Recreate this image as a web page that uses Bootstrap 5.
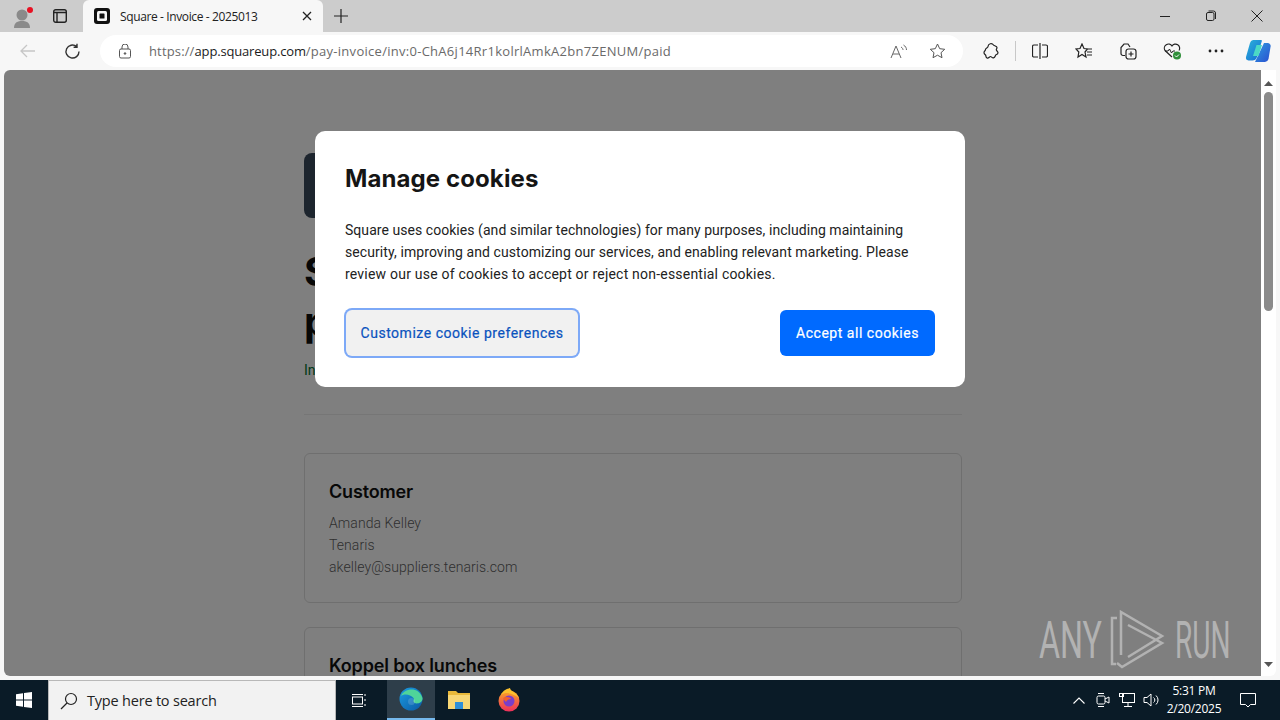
<!DOCTYPE html>
<html lang="en">
<head>
<meta charset="utf-8">
<title>Square - Invoice - 2025013</title>
<link rel="stylesheet" href="https://cdn.jsdelivr.net/npm/bootstrap@5.3.0/dist/css/bootstrap.min.css">
<style>
html,body{height:100%;overflow:hidden}
body{width:1280px;height:720px;background:#f7f7f7;font-family:"Roboto","Liberation Sans",sans-serif;display:flex;flex-direction:column}
svg{display:block;flex:none}
.tabstrip{height:32px;background:#ccc;flex:none}
.profile-zone{width:83px;padding-left:11px;gap:18px;flex:none}
.tab-on{width:240px;height:32px;flex:none;background:#f7f7f7;border-radius:6px 6px 0 0;padding:0 11px;font:12px "Open Sans","Liberation Sans",sans-serif;color:#222}
.tab-title{margin-left:10px;flex:1;letter-spacing:-.38px;white-space:nowrap}
.newtab{margin-left:11px}
.win-ctrls{margin-left:auto;gap:28px;padding-right:14px}
.toolbar{height:38px;background:#f7f7f7;flex:none;padding-left:20px}
.nav-zone{gap:28px;width:80px;flex:none}
.urlbar{width:863px;height:32px;flex:none;border-radius:16px;background:#fff;padding:0 17px 0 19px;font:13px "Open Sans","Liberation Sans",sans-serif;color:#6a6a6a}
.url-text{margin-left:18px;flex:1;white-space:nowrap;letter-spacing:.28px}
.url-text b{font-weight:400;color:#1b1b1b;letter-spacing:-.17px}
.url-proto{letter-spacing:.15px}
.read-aloud{margin-right:22px}
.tools{margin-left:6px;flex:none}
.toolcell{width:44px;display:flex;justify-content:center}
.toolcell-end{width:40px}
.tooldiv{width:1px;height:20px;background:#c8c8c8;margin:0 2px}
.viewarea{height:606px;flex:none;position:relative;overflow:hidden;padding-left:4px;background:#f7f7f7}
.pagewrap{position:relative;width:1257px;height:606px;background:#fff;border-radius:6px 0 0 6px;overflow:hidden}
.pagebody{width:658px;margin-left:300px;padding-top:83px;color:#101010}
.logo-block{width:65px;height:65px;background:#3b4a5c;border-radius:8px}
.inv-h{font-family:"Inter",sans-serif;font-size:40px;line-height:50px;font-weight:700;margin:29px 0 0;width:500px}
.inv-status{color:#00732e;font-size:14px;line-height:22px;margin:12px 0 0}
.inv-rule{border-top:1px solid #ececec;margin:33px 0 38px}
.inv-card{border:1px solid #dedede;border-radius:6px;padding:26px 24px 24px;margin-bottom:24px;height:150px}
.inv-card h2{font-family:"Inter",sans-serif;font-size:18px;line-height:24px;font-weight:600;margin:0 0 8px;color:#101010;letter-spacing:-.15px}
.inv-card p{font-size:14px;line-height:22px;margin:0;color:#606060;letter-spacing:.08px;font-weight:300}
.scrim{position:absolute;inset:0;background:rgba(0,0,0,.5)}
.cookie-box{position:absolute;left:311px;top:61px;width:650px;height:256px;background:#fff;border-radius:10px;padding:30px}
.cookie-box h1{font-family:"Inter",sans-serif;font-size:24px;line-height:36px;font-weight:700;margin:0 0 22px;color:#151515;letter-spacing:.1px}
.cookie-box p{font-size:14px;line-height:22px;margin:0 0 25px;color:#222;letter-spacing:.05px;white-space:nowrap}
.ck-l{display:block}
.ck-l2{letter-spacing:.085px}
.ck-l3{letter-spacing:.21px}
.ck-btn{height:46px;border-radius:6px;font-size:14px;font-weight:400;padding:0;border:0;letter-spacing:.52px;white-space:nowrap}
.ck-ghost{background:#f1f1f1;color:#0a53be;box-shadow:0 0 0 2px #7da9f7;width:232px;margin-left:1px;-webkit-text-stroke:.2px #0a53be}
.ck-solid{background:#006aff;color:#fff;width:155px;-webkit-text-stroke:.2px #fff}
.wm{position:absolute;left:1039px;top:540px;height:62px;color:#b2b2b2}
.wm-w{display:inline-block;font:400 52px/62px "Roboto",sans-serif;transform-origin:left center;white-space:nowrap}
.wm-a{width:71px;transform:scaleX(.62)}
.wm-r{width:65px;margin-left:9px;transform:scaleX(.54)}
.scrolltrack{position:absolute;right:4px;top:0;width:15px;height:606px;background:#fff;display:flex;flex-direction:column;border-radius:0 0 6px 0}
.scrollarrow{height:16px;display:flex;align-items:center;justify-content:center;margin-top:5px}
.scrollarrow-d{margin-top:auto;margin-bottom:4px}
.scrollthumb{width:9px;height:219px;background:#8b8b8b;border-radius:5px;margin:1px auto 0}
.bottomstrip{height:4px;flex:none;background:#f7f7f7}
.taskbar{height:40px;flex:none;background:#0a1b27;color:#fff}
.startcell{width:48px;flex:none;display:flex;justify-content:center}
.searchbox{width:288px;height:40px;flex:none;background:#f2f2f2;color:#222;font:14.5px "Open Sans","Liberation Sans",sans-serif;padding-left:11px;gap:9px;border:1px solid #b8b8b8;border-width:1px 1px 0;letter-spacing:-.2px}
.taskcell{width:48px;height:40px;flex:none;display:flex;align-items:center;justify-content:center}
.taskcell.on{background:#2e3e4a;border-bottom:2px solid #76b9ed;margin-left:3px}
.taskcell-ff{margin-left:2px}
.tray{margin-left:auto;padding-right:10px;flex:none}
.traycell{width:24px;display:flex;justify-content:center}
.clock{font:12px/18px "Open Sans","Liberation Sans",sans-serif;text-align:center;width:62px;color:#fff;letter-spacing:-.25px;white-space:nowrap}
.notif{width:45px;display:flex;justify-content:center}
</style>
</head>
<body>
<div class="tabstrip d-flex align-items-center">
  <div class="profile-zone d-flex align-items-center">
    <svg width="24" height="26" viewBox="0 0 24 26"><circle cx="11" cy="12" r="5.5" fill="#8a8a8a"/><path d="M3 25c0-6 4-7 8-7s8 1 8 7z" fill="#8a8a8a"/><circle cx="19" cy="7" r="3" fill="#e81123"/></svg>
    <svg width="14" height="14" viewBox="0 0 14 14" fill="none" stroke="#222" stroke-width="1.4"><rect x=".7" y=".7" width="12.6" height="12.6" rx="2"/><path d="M.7 3.5h12.6M4 3.5v9.8"/></svg>
  </div>
  <div class="tab-on d-flex align-items-center">
    <svg width="16" height="16" viewBox="0 0 16 16"><rect width="16" height="16" rx="3" fill="#111"/><rect x="3" y="3" width="10" height="10" rx="1.5" fill="#f7f7f7"/><rect x="5.5" y="5.5" width="5" height="5" rx=".6" fill="#111"/></svg>
    <span class="tab-title">Square - Invoice - 2025013</span>
    <svg width="10" height="10" viewBox="0 0 10 10" stroke="#222" stroke-width="1.3"><path d="M1 1l8 8M9 1l-8 8"/></svg>
  </div>
  <svg class="newtab" width="14" height="14" viewBox="0 0 14 14" stroke="#222" stroke-width="1.2"><path d="M7 0v14M0 7h14"/></svg>
  <div class="win-ctrls d-flex align-items-center">
    <svg width="18" height="12" viewBox="0 0 18 12" stroke="#222"><path d="M4 6.500h10"/></svg>
    <svg width="18" height="12" viewBox="0 0 18 12" fill="none" stroke="#222"><rect x="4.500" y="2.500" width="7.500" height="8" rx="1.500"/><path d="M6.500 1h5a2 2 0 0 1 2 2v6"/></svg>
    <svg width="18" height="12" viewBox="-2 0 18 12" stroke="#222"><path d="M1.500.5l11 11M12.500.5l-11 11"/></svg>
  </div>
</div>
<div class="toolbar d-flex align-items-center">
  <div class="nav-zone d-flex align-items-center">
    <svg width="16" height="14" viewBox="0 0 16 14" fill="none" stroke="#c6c6c6" stroke-width="1.300"><path d="M15 7H1M7 1L1 7l6 6"/></svg>
    <svg width="17" height="17" viewBox="0 0 17 17" fill="none" stroke="#333" stroke-width="1.400"><path d="M15 8.500A6.500 6.500 0 1 1 12.500 3.400M13 .8v3.400H9.600"/></svg>
  </div>
  <div class="urlbar d-flex align-items-center">
    <svg width="12" height="15" viewBox="0 0 12 15" fill="none" stroke="#555"><rect x=".5" y="5" width="11" height="9" rx="1.500"/><path d="M3 5V3a3 3 0 0 1 6 0v2"/><circle cx="6" cy="9.500" r=".8" fill="#555"/></svg>
    <span class="url-text"><span class="url-proto">https://</span><b>app.squareup.com</b>/pay-invoice/inv:0-ChA6j14Rr1kolrlAmkA2bn7ZENUM/paid</span>
    <svg class="read-aloud" width="17" height="15" viewBox="0 0 17 15" fill="none" stroke="#666"><path d="M1 14L6 2l5 12M3 10h6M11 3c1.500.8 2 2 2 3M13.500 1c2 1.200 3 3 3 5"/></svg>
    <svg width="17" height="16" viewBox="0 0 17 16" fill="none" stroke="#555"><path d="M8.500 1l2.200 4.700 5 .6-3.700 3.400 1 5-4.500-2.500L4 14.700l1-5L1.300 6.300l5-.6z"/></svg>
  </div>
  <div class="tools d-flex align-items-center">
    <div class="toolcell"><svg width="16" height="17" viewBox="0 0 16 17" fill="none" stroke="#222" stroke-width="1.200"><path d="M5 3.500a3 3 0 0 1 5.500-1.500c.4.700 3.500 1 3.500 2.500 0 1.200-.7 1.500-.7 2.300 0 1 1.700 1.500 1.700 3 0 1.300-1.300 1.700-2 2-1 .5-.5 2.500-2.500 3-1.500.3-2-1.300-3-1.300S5.500 15.800 4 15c-1.500-.8-.8-2.200-1.500-3-.6-.7-1.500-.8-1.500-2.500C1 8 2.500 8 2.500 6.500S5 5 5 3.500z"/></svg></div>
    <div class="tooldiv"></div>
    <div class="toolcell"><svg width="16" height="16" viewBox="0 0 16 16" fill="none" stroke="#222" stroke-width="1.200"><path d="M6 2H2a1.500 1.500 0 0 0-1.500 1.500v9A1.500 1.500 0 0 0 2 14h4M10 2h4a1.500 1.500 0 0 1 1.500 1.500v9A1.500 1.500 0 0 1 14 14h-4M8 0v16"/></svg></div>
    <div class="toolcell"><svg width="18" height="16" viewBox="0 0 18 16" fill="none" stroke="#222" stroke-width="1.200"><path d="M7 1l2 4.500 3.500.5-2.500 3 1 5-4-2.500L3 14l.8-5L1 6l4-.5zM12 6h5M12 9h5M12 12h5"/></svg></div>
    <div class="toolcell"><svg width="17" height="17" viewBox="0 0 17 17" fill="none" stroke="#222" stroke-width="1.200"><path d="M5 12.500H3a2 2 0 0 1-2-2V4.500L4 1h4l2 3"/><rect x="6" y="6" width="10" height="10" rx="2.500"/><path d="M11 8.500v5M8.500 11h5"/></svg></div>
    <div class="toolcell"><svg width="19" height="18" viewBox="0 0 19 18"><path d="M9 15L2 8.500A3.800 3.800 0 0 1 9 4a3.800 3.800 0 0 1 7 4.500" fill="none" stroke="#222" stroke-width="1.200"/><path d="M2 9h3l1.500-2 2 4 1.500-2h2" fill="none" stroke="#222"/><circle cx="14" cy="13.500" r="4" fill="#2f8f3a"/><path d="M12 13.500l1.500 1.500 2.500-2.500" fill="none" stroke="#fff"/></svg></div>
    <div class="toolcell"><svg width="16" height="4" viewBox="0 0 16 4" fill="#222"><circle cx="2" cy="2" r="1.400"/><circle cx="8" cy="2" r="1.400"/><circle cx="14" cy="2" r="1.400"/></svg></div>
    <div class="toolcell toolcell-end"><svg width="26" height="24" viewBox="0 0 26 24"><defs><linearGradient id="cpa" x1="0" y1="0" x2="1" y2="1"><stop offset="0" stop-color="#2cb5d8"/><stop offset="1" stop-color="#1668d6"/></linearGradient><linearGradient id="cpb" x1="0" y1="0" x2="1" y2="1"><stop offset="0" stop-color="#2e9de0"/><stop offset="1" stop-color="#2a4fd0"/></linearGradient></defs><path d="M8 1h8a2 2 0 0 1 1 .5L12 18a5 5 0 0 1-5 3.500H3.500A3 3 0 0 1 1 18L5 4a4 4 0 0 1 3-3z" fill="url(#cpa)"/><path d="M10 23h10a4 4 0 0 0 3.500-3L25.500 8A3 3 0 0 0 23 4h-4z" fill="url(#cpb)"/><path d="M11.500 6H17l-3.500 11H8z" fill="#4bd9c5"/></svg></div>
  </div>
</div>
<div class="viewarea">
  <div class="pagewrap">
    <div class="pagebody">
      <div class="logo-block"></div>
      <h2 class="inv-h">Square Invoice<br>paid</h2>
      <div class="inv-status">Invoice paid</div>
      <div class="inv-rule"></div>
      <div class="inv-card">
        <h2>Customer</h2>
        <p>Amanda Kelley</p>
        <p>Tenaris</p>
        <p>akelley@suppliers.tenaris.com</p>
      </div>
      <div class="inv-card">
        <h2>Koppel box lunches</h2>
      </div>
    </div>
    <div class="scrim"></div>
    <div class="cookie-box">
      <h1>Manage cookies</h1>
      <p><span class="ck-l">Square uses cookies (and similar technologies) for many purposes, including maintaining</span><span class="ck-l ck-l2">security, improving and customizing our services, and enabling relevant marketing. Please</span><span class="ck-l ck-l3">review our use of cookies to accept or reject non-essential cookies.</span></p>
      <div class="d-flex justify-content-between align-items-center">
        <button type="button" class="btn ck-btn ck-ghost">Customize cookie preferences</button>
        <button type="button" class="btn ck-btn ck-solid">Accept all cookies</button>
      </div>
    </div>
  </div>
  <div class="scrolltrack">
    <div class="scrollarrow"><svg width="9" height="5" viewBox="0 0 9 5" fill="#555"><path d="M4.500 0L9 5H0z"/></svg></div>
    <div class="scrollthumb"></div>
    <div class="scrollarrow scrollarrow-d"><svg width="9" height="5" viewBox="0 0 9 5" fill="#555"><path d="M0 0h9L4.500 5z"/></svg></div>
  </div>
  <div class="wm d-flex align-items-center">
    <span class="wm-w wm-a">ANY</span>
    <svg width="56" height="62" viewBox="10 5 56 62" fill="none" stroke="currentColor" stroke-width="2.500"><path d="M17 13h-5v46h4M21 50V7l41 24-34 21M28 20l34 18-40 24-5-4"/></svg>
    <span class="wm-w wm-r">RUN</span>
  </div>
</div>
<div class="bottomstrip"></div>
<div class="taskbar d-flex align-items-center">
  <div class="startcell"><svg width="16" height="16" viewBox="0 0 16 16" fill="#fff"><path d="M0 2.200l7-1v6.300H0zM8 1l8-1v7.500H8zM0 8.500h7v6.300l-7-1zM8 8.500h8V16l-8-1z"/></svg></div>
  <div class="searchbox d-flex align-items-center">
    <svg width="18" height="18" viewBox="0 0 18 18" fill="none" stroke="#222" stroke-width="1.200"><circle cx="11" cy="7" r="5.500"/><path d="M7 11l-6 6"/></svg>
    <span>Type here to search</span>
  </div>
  <div class="taskcell"><svg width="16" height="15" viewBox="0 0 16 15" fill="none" stroke="#fff"><rect x=".5" y="4" width="10" height="7"/><path d="M0 1.500h11M0 13.500h11M13 1v2M13 6v2M13 11v2"/></svg></div>
  <div class="taskcell on"><svg width="24" height="24" viewBox="0 0 24 24"><defs><linearGradient id="edg" x1="0" y1="0" x2="1" y2="1"><stop offset="0" stop-color="#1b9de2"/><stop offset="1" stop-color="#0c59a4"/></linearGradient></defs><circle cx="12" cy="12" r="11.500" fill="url(#edg)"/><path d="M2 9C5 1 20-1 23.500 11c.5 6-9 7-9 3 0-1 1-2 0-3-3-3-8-5-12.500-2z" fill="#4fd49a"/><circle cx="12.500" cy="14.500" r="3.500" fill="#fff" opacity=".15"/></svg></div>
  <div class="taskcell"><svg width="22" height="20" viewBox="0 0 22 20"><path d="M0 1h8l2 2h12v16H0z" fill="#e9b93a"/><rect x="0" y="5" width="22" height="14" fill="#f8d775"/><rect x="7" y="12" width="8" height="7" fill="#2f8fd8"/></svg></div>
  <div class="taskcell taskcell-ff"><svg width="24" height="24" viewBox="0 0 24 24"><defs><linearGradient id="ffx" x1="0" y1="0" x2="0" y2="1"><stop offset="0" stop-color="#f9a825"/><stop offset="1" stop-color="#ee2f5c"/></linearGradient></defs><circle cx="12" cy="13" r="10.500" fill="url(#ffx)"/><path d="M4 7c2-5 6-6 9-7 0 3 6 4 9 10-5-4-13-7-18-3z" fill="#fbc02d"/><circle cx="12" cy="13" r="5.500" fill="#7b3ec9"/><path d="M6 10c3-2 7-1 8 1-2 0-4 1-5 3-1-1-2-2-3-4z" fill="#f4612a"/></svg></div>
  <div class="tray d-flex align-items-center">
    <div class="traycell"><svg width="12" height="7" viewBox="0 0 12 7" fill="none" stroke="#fff" stroke-width="1.100"><path d="M.5 6.500L6 1l5.500 5.500"/></svg></div>
    <div class="traycell"><svg width="14" height="16" viewBox="0 0 14 16" fill="none" stroke="#fff"><rect x="1" y="4" width="8" height="8" rx="1.500"/><path d="M9 7l4-2v6l-4-2M2 1.500h6M2 14.500h6"/></svg></div>
    <div class="traycell"><svg width="16" height="14" viewBox="0 0 16 14" fill="none" stroke="#fff"><rect x="3.500" y=".5" width="12" height="9"/><rect x=".5" y=".5" width="4" height="3"/><path d="M9 10v3M5 13.500h8"/></svg></div>
    <div class="traycell"><svg width="17" height="14" viewBox="0 0 17 14" fill="none" stroke="#fff"><path d="M1 4.500h3L8 1v12L4 9.500H1zM10.500 4.500a3 3 0 0 1 0 5M13 2.500a6 6 0 0 1 0 9"/></svg></div>
    <div class="clock">5:31 PM<br>2/20/2025</div>
    <div class="notif"><svg width="16" height="15" viewBox="0 0 16 15" fill="none" stroke="#fff"><path d="M.5.500h15v11h-5l-2.500 2.500L5.500 11.500h-5z"/></svg></div>
  </div>
</div>
<script src="https://cdn.jsdelivr.net/npm/bootstrap@5.3.0/dist/js/bootstrap.bundle.min.js"></script>
</body>
</html>
